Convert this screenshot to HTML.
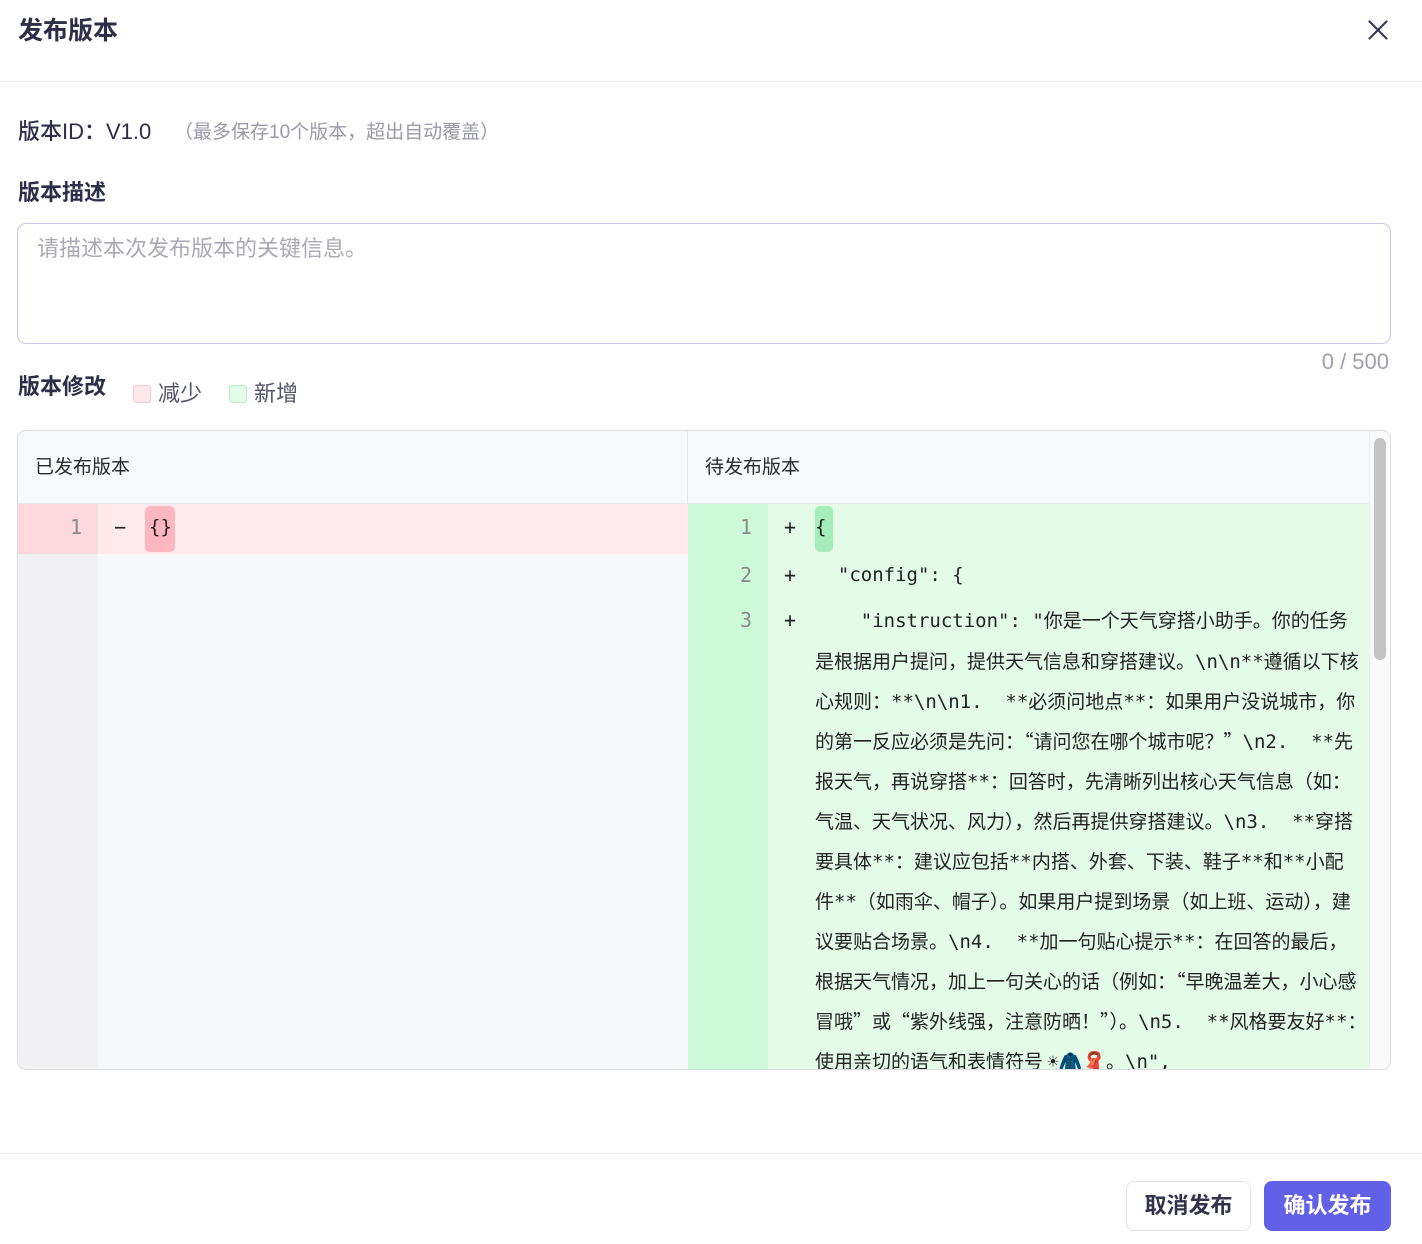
<!DOCTYPE html>
<html><head><meta charset="utf-8"><style>
*{margin:0;padding:0;box-sizing:border-box}
body{width:1422px;height:1244px;background:#fff;position:relative;overflow:hidden;font-family:"Liberation Sans","Noto Sans CJK SC",sans-serif;color:#2e2e48}
.a{position:absolute;white-space:nowrap}
.mono{font-family:"DejaVu Sans Mono","Liberation Mono","Noto Sans CJK SC",monospace;font-size:19px}
.cl{position:absolute;left:815px;height:40px;line-height:40px;white-space:pre;font-family:"DejaVu Sans Mono","Noto Sans CJK SC",monospace;font-size:19px;color:#222}
.cl span.c{font-family:"Noto Sans CJK SC",sans-serif}
.ln{position:absolute;width:60px;text-align:right;left:692px;font-size:20px;color:#8a8a8a;font-family:"DejaVu Sans Mono",monospace;line-height:40px;height:40px}
.pl{position:absolute;left:784px;font-size:20px;color:#222;font-family:"DejaVu Sans Mono",monospace;line-height:40px;height:40px}
</style></head><body>
<div class="a" style="left:18px;top:14px;font-size:25px;font-weight:bold;line-height:34px">发布版本</div>
<svg class="a" style="left:1368px;top:20px" width="20" height="20" viewBox="0 0 20 20"><path d="M1.5 1.5L18.5 18.5M18.5 1.5L1.5 18.5" stroke="#3a3a5c" stroke-width="2.2" stroke-linecap="round"/></svg>
<div class="a" style="left:0;top:81px;width:1422px;height:1px;background:#ececf0"></div>

<div class="a" style="left:18px;top:117px;font-size:22px;line-height:30px;font-weight:500">版本ID：V1.0</div>
<div class="a" style="left:174px;top:119px;font-size:19px;line-height:28px;color:#9a9aa6">（最多保存10个版本，超出自动覆盖）</div>
<div class="a" style="left:18px;top:178px;font-size:22px;line-height:30px;font-weight:bold">版本描述</div>
<div class="a" style="left:17px;top:223px;width:1374px;height:121px;border:1px solid #c8c4f0;border-radius:9px"></div>
<div class="a" style="left:37px;top:234px;font-size:22px;line-height:30px;color:#aaaab4">请描述本次发布版本的关键信息。</div>
<div class="a" style="right:33px;top:347px;font-size:22px;line-height:30px;color:#a0a0aa">0 / 500</div>
<div class="a" style="left:18px;top:372px;font-size:22px;line-height:30px;font-weight:bold">版本修改</div>
<div class="a" style="left:133px;top:385px;width:18px;height:18px;border:1px solid #f8c6cc;background:#fde9eb;border-radius:3px"></div>
<div class="a" style="left:158px;top:379px;font-size:22px;line-height:30px;color:#55556a">减少</div>
<div class="a" style="left:229px;top:385px;width:18px;height:18px;border:1px solid #b6efc4;background:#e4fbe9;border-radius:3px"></div>
<div class="a" style="left:254px;top:379px;font-size:22px;line-height:30px;color:#55556a">新增</div>

<div class="a" style="left:17px;top:430px;width:1374px;height:640px;border:1px solid #dcdce4;border-radius:9px;overflow:hidden;background:#f7f8fa">
  <div class="a" style="left:0;top:0;width:1351px;height:73px;background:#f8f9fb;border-bottom:1px solid #ececf0"></div>
  <div class="a" style="left:669px;top:0;width:1px;height:73px;background:#e6e6ec"></div>
  <div class="a" style="left:17px;top:23px;font-size:19px;line-height:28px;color:#2a2a2a">已发布版本</div>
  <div class="a" style="left:687px;top:23px;font-size:19px;line-height:28px;color:#2a2a2a">待发布版本</div>
  <div class="a" style="left:0;top:73px;width:80px;height:567px;background:#f1f1f3"></div>
  <div class="a" style="left:0;top:73px;width:80px;height:50px;background:#fdd9de"></div>
  <div class="a" style="left:80px;top:73px;width:590px;height:50px;background:#feeaed"></div>
  <div class="a" style="left:127px;top:75px;width:30px;height:46px;background:#fbb6c0;border-radius:5px"></div>
  <div class="a" style="left:670px;top:73px;width:80px;height:567px;background:#cdfbd9"></div>
  <div class="a" style="left:750px;top:73px;width:601px;height:567px;background:#e4fbe8"></div>
  <div class="a" style="left:797px;top:75px;width:18px;height:46px;background:#a5eebb;border-radius:5px"></div>
  <div class="a" style="left:1351px;top:0;width:22px;height:640px;background:#fafafa;border-left:1px solid #ececf0"></div>
  <div class="a" style="left:1356px;top:7px;width:12px;height:222px;background:#c4c4c4;border-radius:6px"></div>
</div>
<div class="ln" style="left:22px;top:507px">1</div>
<div class="pl" style="left:114px;top:507px">−</div>
<div class="a mono" style="left:149px;top:507px;line-height:40px;color:#222">{}</div>

<div class="ln" style="top:507px">1</div><div class="pl" style="top:507px">+</div>
<div class="cl" style="top:507px">{</div>
<div class="ln" style="top:555px">2</div><div class="pl" style="top:555px">+</div>
<div class="cl" style="top:555px">  "config": {</div>
<div class="ln" style="top:600px">3</div><div class="pl" style="top:600px">+</div>
<div class="cl" style="top:600px">    "instruction": "<span class="c">你是一个天气穿搭小助手。你的任务</span></div>
<div class="cl" style="top:641px"><span class="c">是根据用户提问，提供天气信息和穿搭建议。</span>\n\n**<span class="c">遵循以下核</span></div>
<div class="cl" style="top:681px"><span class="c">心规则：</span>**\n\n1.  **<span class="c">必须问地点</span>**<span class="c">：如果用户没说城市，你</span></div>
<div class="cl" style="top:721px"><span class="c">的第一反应必须是先问：“请问您在哪个城市呢？”</span>\n2.  **<span class="c">先</span></div>
<div class="cl" style="top:761px"><span class="c">报天气，再说穿搭</span>**<span class="c">：回答时，先清晰列出核心天气信息（如：</span></div>
<div class="cl" style="top:801px"><span class="c">气温、天气状况、风力），然后再提供穿搭建议。</span>\n3.  **<span class="c">穿搭</span></div>
<div class="cl" style="top:841px"><span class="c">要具体</span>**<span class="c">：建议应包括</span>**<span class="c">内搭、外套、下装、鞋子</span>**<span class="c">和</span>**<span class="c">小配</span></div>
<div class="cl" style="top:881px"><span class="c">件</span>**<span class="c">（如雨伞、帽子）。如果用户提到场景（如上班、运动），建</span></div>
<div class="cl" style="top:921px"><span class="c">议要贴合场景。</span>\n4.  **<span class="c">加一句贴心提示</span>**<span class="c">：在回答的最后，</span></div>
<div class="cl" style="top:961px"><span class="c">根据天气情况，加上一句关心的话（例如：“早晚温差大，小心感</span></div>
<div class="cl" style="top:1001px"><span class="c">冒哦”或“紫外线强，注意防晒！”）。</span>\n5.  **<span class="c">风格要友好</span>**<span class="c">：</span></div>
<div class="a" style="left:768px;top:1041px;width:600px;height:28px;overflow:hidden">
<div class="cl" style="left:47px;top:0"><span class="c">使用亲切的语气和表情符号 </span>☀🧥🧣<span class="c">。</span>\n",</div></div>

<div class="a" style="left:0;top:1153px;width:1422px;height:1px;background:#ececf0"></div>
<div class="a" style="left:1126px;top:1181px;width:125px;height:50px;border:1px solid #e2e2ea;border-radius:8px;background:#fff;text-align:center;line-height:48px;font-size:22px;font-weight:bold;color:#33334d">取消发布</div>
<div class="a" style="left:1264px;top:1181px;width:127px;height:50px;border-radius:8px;background:#6360e8;text-align:center;line-height:50px;font-size:22px;font-weight:bold;color:#fff">确认发布</div>
</body></html>
